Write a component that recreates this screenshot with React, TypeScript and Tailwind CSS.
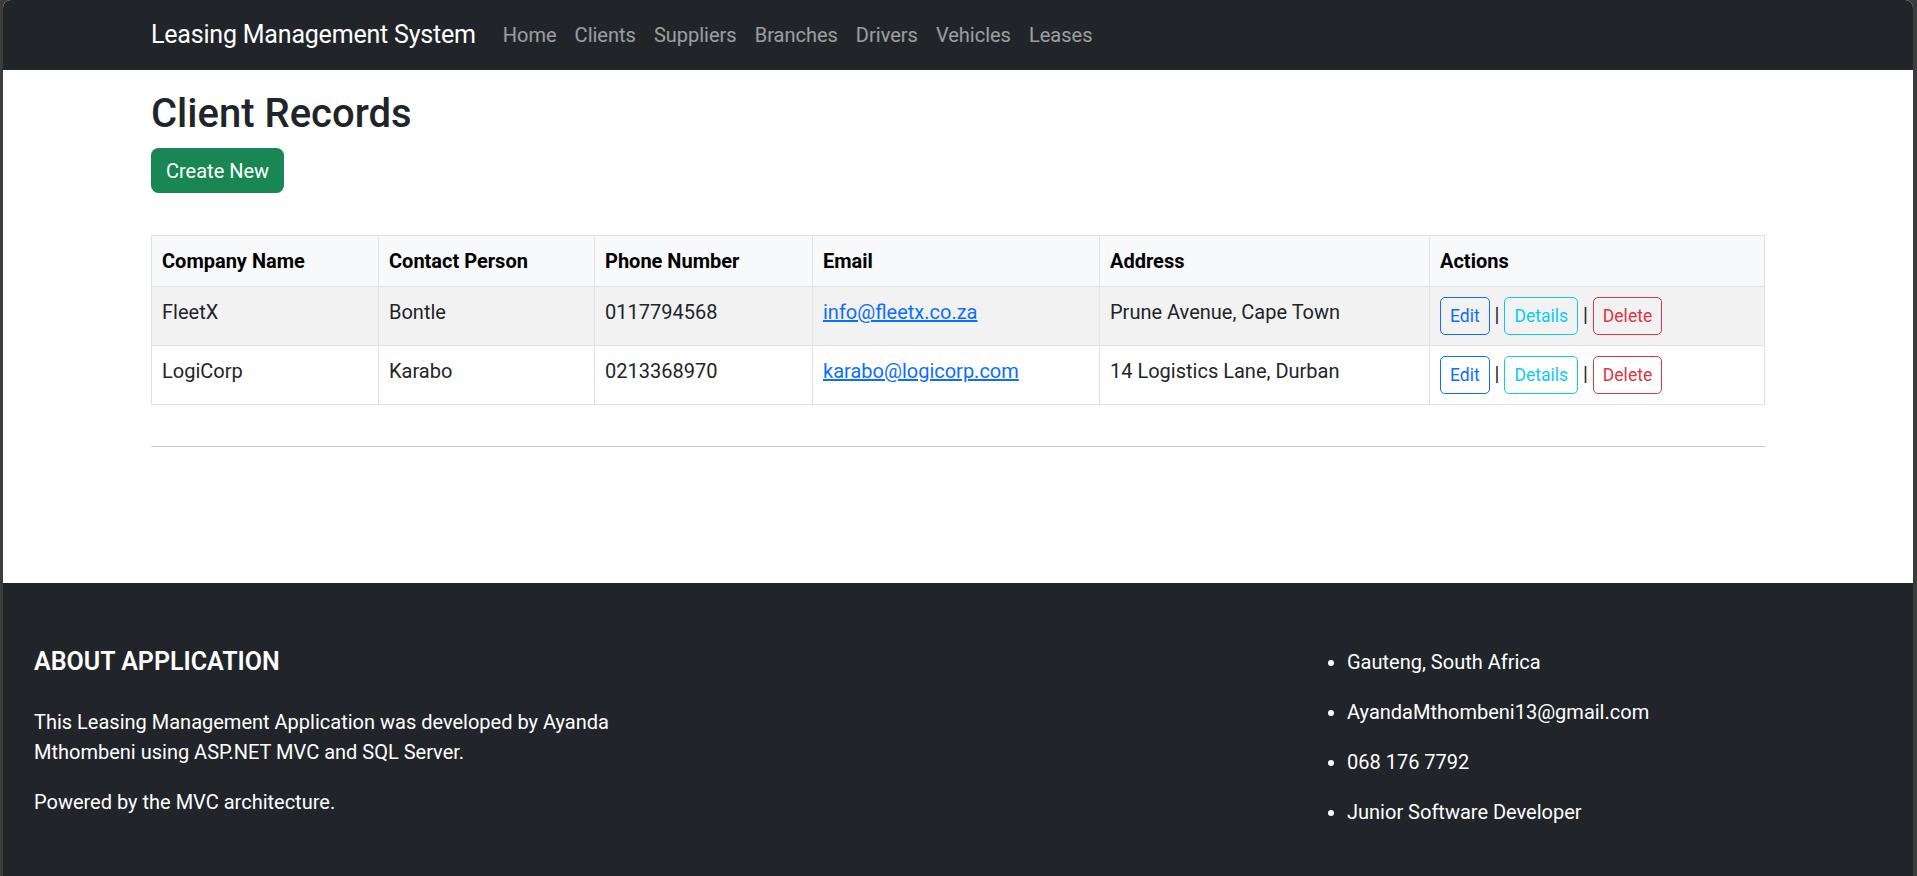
const navLinks = ["Home", "Clients", "Suppliers", "Branches", "Drivers", "Vehicles", "Leases"];

const clients = [
  {
    company: "FleetX",
    contact: "Bontle",
    phone: "0117794568",
    email: "info@fleetx.co.za",
    address: "Prune Avenue, Cape Town",
  },
  {
    company: "LogiCorp",
    contact: "Karabo",
    phone: "0213368970",
    email: "karabo@logicorp.com",
    address: "14 Logistics Lane, Durban",
  },
];

const contactItems = [
  "Gauteng, South Africa",
  "AyandaMthombeni13@gmail.com",
  "068 176 7792",
  "Junior Software Developer",
];

function ActionButtons() {
  return (
    <>
      <a className="inline-block cursor-pointer rounded-[5px] border border-[#0d6efd] px-[9px] py-[5px] text-[17.5px] leading-[26px] text-[#0d6efd]">
        Edit
      </a>{" "}
      |{" "}
      <a className="inline-block cursor-pointer rounded-[5px] border border-[#0dcaf0] px-[9px] py-[5px] text-[17.5px] leading-[26px] text-[#0dcaf0]">
        Details
      </a>{" "}
      |{" "}
      <a className="inline-block cursor-pointer rounded-[5px] border border-[#dc3545] px-[9px] py-[5px] text-[17.5px] leading-[26px] text-[#dc3545]">
        Delete
      </a>
    </>
  );
}

export default function App() {
  return (
    <div className="flex h-[876px] w-full bg-[#3c3c3c] pl-[3px] pr-[4px] font-['Segoe_UI',Roboto,sans-serif]">
      <div className="flex h-full w-full flex-col overflow-hidden rounded-t-[8px] bg-white">
        {/* navbar */}
        <nav className="h-[70px] shrink-0 bg-[#212529]">
          <div className="mx-auto flex h-full max-w-[1638px] items-center px-[12px]">
            <a className="mr-[18px] text-[25px] leading-[38px] tracking-[-0.2px] text-white">Leasing Management System</a>
            <ul className="flex">
              {navLinks.map((l) => (
                <li key={l}>
                  <a className="block px-[9px] text-[20px] leading-[30px] text-white/55">{l}</a>
                </li>
              ))}
            </ul>
          </div>
        </nav>

        {/* main */}
        <main className="mx-auto w-full max-w-[1638px] px-[12px] pt-[20px] text-[20px] leading-[30px] text-[#212529]">
          <h2 className="mb-[10px] text-[40px] leading-[48px] font-medium">Client Records</h2>
          <p className="mb-[42px]">
            <a className="inline-block cursor-pointer rounded-[7.5px] bg-[#198754] px-[15px] py-[7.5px] text-[20px] leading-[30px] text-white">
              Create New
            </a>
          </p>

          <table className="w-full border-collapse border border-[#dee2e6]">
            <thead>
              <tr className="bg-[#f8f9fa] text-left text-black">
                <th className="w-[227px] border border-[#dee2e6] p-[10px] font-bold">Company Name</th>
                <th className="w-[216px] border border-[#dee2e6] p-[10px] font-bold">Contact Person</th>
                <th className="w-[218px] border border-[#dee2e6] p-[10px] font-bold">Phone Number</th>
                <th className="w-[287px] border border-[#dee2e6] p-[10px] font-bold">Email</th>
                <th className="w-[330px] border border-[#dee2e6] p-[10px] font-bold">Address</th>
                <th className="border border-[#dee2e6] p-[10px] font-bold">Actions</th>
              </tr>
            </thead>
            <tbody>
              {clients.map((c, i) => (
                <tr key={c.company} className={i % 2 === 0 ? "bg-[#f2f2f2]" : "bg-white"}>
                  <td className="border border-[#dee2e6] p-[10px] align-top">{c.company}</td>
                  <td className="border border-[#dee2e6] p-[10px] align-top">{c.contact}</td>
                  <td className="border border-[#dee2e6] p-[10px] align-top">{c.phone}</td>
                  <td className="border border-[#dee2e6] p-[10px] align-top">
                    <a className="cursor-pointer text-[#0d6efd] underline">{c.email}</a>
                  </td>
                  <td className="border border-[#dee2e6] p-[10px] align-top">{c.address}</td>
                  <td className="border border-[#dee2e6] p-[10px] align-top whitespace-nowrap">
                    <ActionButtons />
                  </td>
                </tr>
              ))}
            </tbody>
          </table>
          <hr className="mt-[41px] border-t border-[#c8c9ca]" />
        </main>

        {/* footer */}
        <footer className="mt-auto flex h-[293px] shrink-0 bg-[#212529] px-[31px] pt-[64px] text-[20px] leading-[30px] text-white">
          <div className="w-[630px] pr-[20px]">
            <h5 className="mb-[30px] text-[25px] leading-[30px] font-semibold">ABOUT APPLICATION</h5>
            <p className="mb-[20px]">
              This Leasing Management Application was developed by Ayanda Mthombeni using ASP.NET MVC and SQL Server.
            </p>
            <p>Powered by the MVC architecture.</p>
          </div>
          <ul className="ml-[643px] list-disc pl-[40px]">
            {contactItems.map((item) => (
              <li key={item} className="mb-[20px]">
                {item}
              </li>
            ))}
          </ul>
        </footer>
      </div>
    </div>
  );
}
